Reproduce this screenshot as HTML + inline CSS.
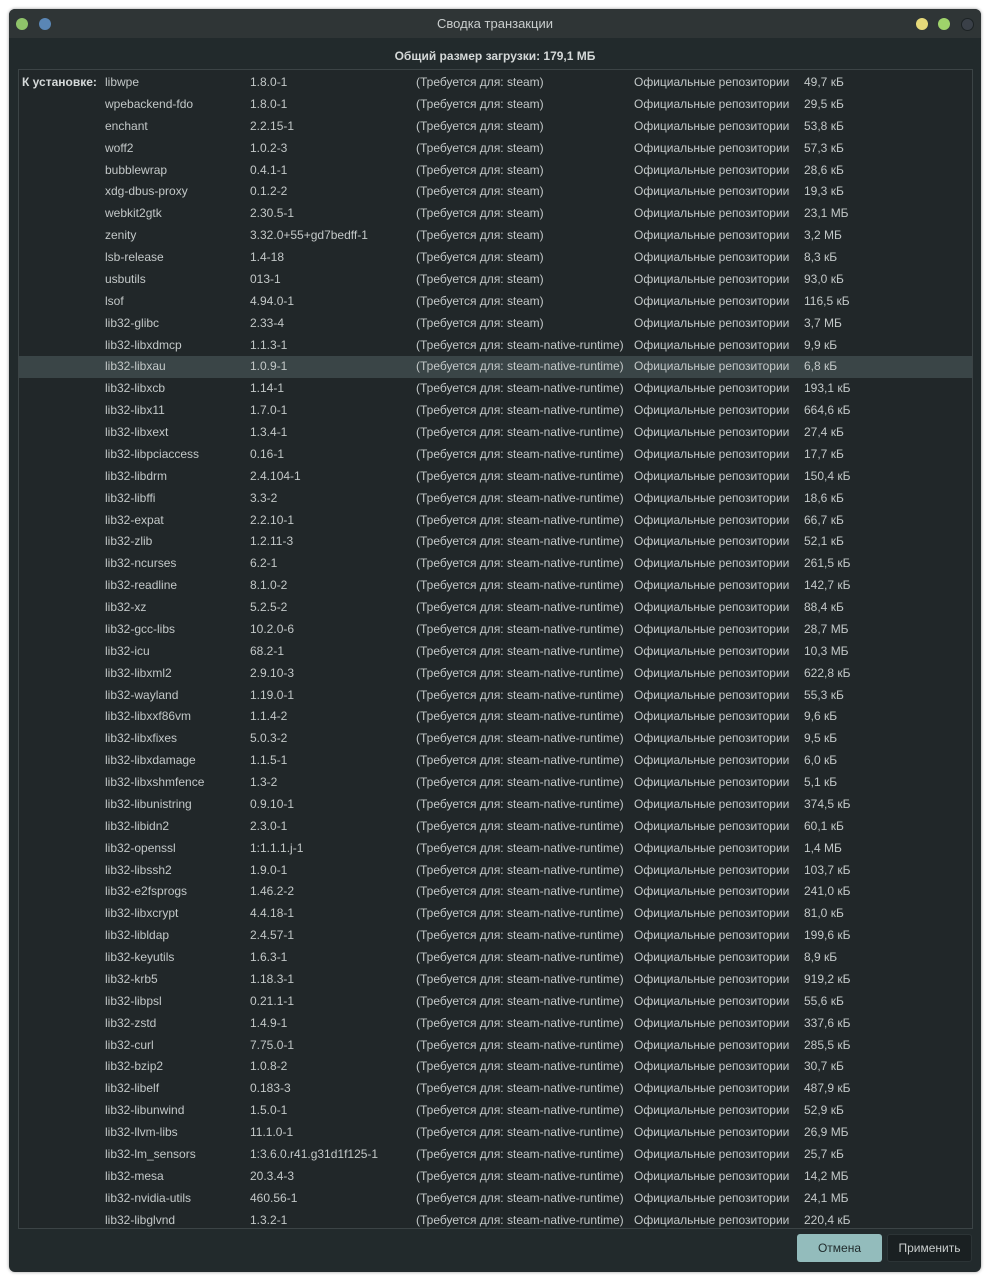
<!DOCTYPE html>
<html><head><meta charset="utf-8"><style>
body{margin:0;width:990px;height:1280px;background:#fff;font-family:"Liberation Sans","DejaVu Sans",sans-serif;overflow:hidden}
.win{position:absolute;left:9px;top:9px;width:972px;height:1263px;background:#222a2c;border-radius:6px;overflow:hidden;box-shadow:0 0 3px rgba(0,0,0,.4)}
.tb{position:absolute;left:0;top:0;width:972px;height:29px;background:#2f3536;color:#c9cdcd;font-size:13px;text-align:center;line-height:30px}
.dot{position:absolute;top:9px;width:12px;height:12px;border-radius:50%}
.hdr{position:absolute;left:0;top:40px;width:972px;text-align:center;color:#d5d9d9;font-size:12px;font-weight:bold}
.box{position:absolute;left:9px;top:60px;width:953px;height:1158px;border:1px solid #3c4446;background:#212729}
.rows{position:absolute;left:0;top:2px;width:953px}
.r{position:relative;height:21.88px;line-height:21.88px;font-size:12px;color:#c3c8c8;white-space:nowrap}
.r.h{background:#3a4547}
.r span{position:absolute}
.a{left:86px}.b{left:231px}.c{left:397px}.d{left:615px}.e{left:785px}
.lbl{left:3px;font-weight:bold;color:#d5d9d9}
.btn{position:absolute;top:1225px;height:28px;line-height:28px;text-align:center;font-size:12px;border-radius:3px}
</style></head><body>
<div class="win">
<div class="tb">Сводка транзакции
<div class="dot" style="left:7px;background:#8fc36a"></div>
<div class="dot" style="left:30px;background:#5a86b5"></div>
<div class="dot" style="left:907px;background:#e6d97a"></div>
<div class="dot" style="left:929px;background:#9fd36b"></div>
<div class="dot" style="left:952px;background:#3a4048;border:1px solid #1c2224;width:11px;height:11px"></div>
</div>
<div class="hdr">Общий размер загрузки: 179,1 МБ</div>
<div class="box"><div class="rows">
<div class="r"><span class="lbl">К установке:</span><span class="a">libwpe</span><span class="b">1.8.0-1</span><span class="c">(Требуется для: steam)</span><span class="d">Официальные репозитории</span><span class="e">49,7 кБ</span></div>
<div class="r"><span class="a">wpebackend-fdo</span><span class="b">1.8.0-1</span><span class="c">(Требуется для: steam)</span><span class="d">Официальные репозитории</span><span class="e">29,5 кБ</span></div>
<div class="r"><span class="a">enchant</span><span class="b">2.2.15-1</span><span class="c">(Требуется для: steam)</span><span class="d">Официальные репозитории</span><span class="e">53,8 кБ</span></div>
<div class="r"><span class="a">woff2</span><span class="b">1.0.2-3</span><span class="c">(Требуется для: steam)</span><span class="d">Официальные репозитории</span><span class="e">57,3 кБ</span></div>
<div class="r"><span class="a">bubblewrap</span><span class="b">0.4.1-1</span><span class="c">(Требуется для: steam)</span><span class="d">Официальные репозитории</span><span class="e">28,6 кБ</span></div>
<div class="r"><span class="a">xdg-dbus-proxy</span><span class="b">0.1.2-2</span><span class="c">(Требуется для: steam)</span><span class="d">Официальные репозитории</span><span class="e">19,3 кБ</span></div>
<div class="r"><span class="a">webkit2gtk</span><span class="b">2.30.5-1</span><span class="c">(Требуется для: steam)</span><span class="d">Официальные репозитории</span><span class="e">23,1 МБ</span></div>
<div class="r"><span class="a">zenity</span><span class="b">3.32.0+55+gd7bedff-1</span><span class="c">(Требуется для: steam)</span><span class="d">Официальные репозитории</span><span class="e">3,2 МБ</span></div>
<div class="r"><span class="a">lsb-release</span><span class="b">1.4-18</span><span class="c">(Требуется для: steam)</span><span class="d">Официальные репозитории</span><span class="e">8,3 кБ</span></div>
<div class="r"><span class="a">usbutils</span><span class="b">013-1</span><span class="c">(Требуется для: steam)</span><span class="d">Официальные репозитории</span><span class="e">93,0 кБ</span></div>
<div class="r"><span class="a">lsof</span><span class="b">4.94.0-1</span><span class="c">(Требуется для: steam)</span><span class="d">Официальные репозитории</span><span class="e">116,5 кБ</span></div>
<div class="r"><span class="a">lib32-glibc</span><span class="b">2.33-4</span><span class="c">(Требуется для: steam)</span><span class="d">Официальные репозитории</span><span class="e">3,7 МБ</span></div>
<div class="r"><span class="a">lib32-libxdmcp</span><span class="b">1.1.3-1</span><span class="c">(Требуется для: steam-native-runtime)</span><span class="d">Официальные репозитории</span><span class="e">9,9 кБ</span></div>
<div class="r h"><span class="a">lib32-libxau</span><span class="b">1.0.9-1</span><span class="c">(Требуется для: steam-native-runtime)</span><span class="d">Официальные репозитории</span><span class="e">6,8 кБ</span></div>
<div class="r"><span class="a">lib32-libxcb</span><span class="b">1.14-1</span><span class="c">(Требуется для: steam-native-runtime)</span><span class="d">Официальные репозитории</span><span class="e">193,1 кБ</span></div>
<div class="r"><span class="a">lib32-libx11</span><span class="b">1.7.0-1</span><span class="c">(Требуется для: steam-native-runtime)</span><span class="d">Официальные репозитории</span><span class="e">664,6 кБ</span></div>
<div class="r"><span class="a">lib32-libxext</span><span class="b">1.3.4-1</span><span class="c">(Требуется для: steam-native-runtime)</span><span class="d">Официальные репозитории</span><span class="e">27,4 кБ</span></div>
<div class="r"><span class="a">lib32-libpciaccess</span><span class="b">0.16-1</span><span class="c">(Требуется для: steam-native-runtime)</span><span class="d">Официальные репозитории</span><span class="e">17,7 кБ</span></div>
<div class="r"><span class="a">lib32-libdrm</span><span class="b">2.4.104-1</span><span class="c">(Требуется для: steam-native-runtime)</span><span class="d">Официальные репозитории</span><span class="e">150,4 кБ</span></div>
<div class="r"><span class="a">lib32-libffi</span><span class="b">3.3-2</span><span class="c">(Требуется для: steam-native-runtime)</span><span class="d">Официальные репозитории</span><span class="e">18,6 кБ</span></div>
<div class="r"><span class="a">lib32-expat</span><span class="b">2.2.10-1</span><span class="c">(Требуется для: steam-native-runtime)</span><span class="d">Официальные репозитории</span><span class="e">66,7 кБ</span></div>
<div class="r"><span class="a">lib32-zlib</span><span class="b">1.2.11-3</span><span class="c">(Требуется для: steam-native-runtime)</span><span class="d">Официальные репозитории</span><span class="e">52,1 кБ</span></div>
<div class="r"><span class="a">lib32-ncurses</span><span class="b">6.2-1</span><span class="c">(Требуется для: steam-native-runtime)</span><span class="d">Официальные репозитории</span><span class="e">261,5 кБ</span></div>
<div class="r"><span class="a">lib32-readline</span><span class="b">8.1.0-2</span><span class="c">(Требуется для: steam-native-runtime)</span><span class="d">Официальные репозитории</span><span class="e">142,7 кБ</span></div>
<div class="r"><span class="a">lib32-xz</span><span class="b">5.2.5-2</span><span class="c">(Требуется для: steam-native-runtime)</span><span class="d">Официальные репозитории</span><span class="e">88,4 кБ</span></div>
<div class="r"><span class="a">lib32-gcc-libs</span><span class="b">10.2.0-6</span><span class="c">(Требуется для: steam-native-runtime)</span><span class="d">Официальные репозитории</span><span class="e">28,7 МБ</span></div>
<div class="r"><span class="a">lib32-icu</span><span class="b">68.2-1</span><span class="c">(Требуется для: steam-native-runtime)</span><span class="d">Официальные репозитории</span><span class="e">10,3 МБ</span></div>
<div class="r"><span class="a">lib32-libxml2</span><span class="b">2.9.10-3</span><span class="c">(Требуется для: steam-native-runtime)</span><span class="d">Официальные репозитории</span><span class="e">622,8 кБ</span></div>
<div class="r"><span class="a">lib32-wayland</span><span class="b">1.19.0-1</span><span class="c">(Требуется для: steam-native-runtime)</span><span class="d">Официальные репозитории</span><span class="e">55,3 кБ</span></div>
<div class="r"><span class="a">lib32-libxxf86vm</span><span class="b">1.1.4-2</span><span class="c">(Требуется для: steam-native-runtime)</span><span class="d">Официальные репозитории</span><span class="e">9,6 кБ</span></div>
<div class="r"><span class="a">lib32-libxfixes</span><span class="b">5.0.3-2</span><span class="c">(Требуется для: steam-native-runtime)</span><span class="d">Официальные репозитории</span><span class="e">9,5 кБ</span></div>
<div class="r"><span class="a">lib32-libxdamage</span><span class="b">1.1.5-1</span><span class="c">(Требуется для: steam-native-runtime)</span><span class="d">Официальные репозитории</span><span class="e">6,0 кБ</span></div>
<div class="r"><span class="a">lib32-libxshmfence</span><span class="b">1.3-2</span><span class="c">(Требуется для: steam-native-runtime)</span><span class="d">Официальные репозитории</span><span class="e">5,1 кБ</span></div>
<div class="r"><span class="a">lib32-libunistring</span><span class="b">0.9.10-1</span><span class="c">(Требуется для: steam-native-runtime)</span><span class="d">Официальные репозитории</span><span class="e">374,5 кБ</span></div>
<div class="r"><span class="a">lib32-libidn2</span><span class="b">2.3.0-1</span><span class="c">(Требуется для: steam-native-runtime)</span><span class="d">Официальные репозитории</span><span class="e">60,1 кБ</span></div>
<div class="r"><span class="a">lib32-openssl</span><span class="b">1:1.1.1.j-1</span><span class="c">(Требуется для: steam-native-runtime)</span><span class="d">Официальные репозитории</span><span class="e">1,4 МБ</span></div>
<div class="r"><span class="a">lib32-libssh2</span><span class="b">1.9.0-1</span><span class="c">(Требуется для: steam-native-runtime)</span><span class="d">Официальные репозитории</span><span class="e">103,7 кБ</span></div>
<div class="r"><span class="a">lib32-e2fsprogs</span><span class="b">1.46.2-2</span><span class="c">(Требуется для: steam-native-runtime)</span><span class="d">Официальные репозитории</span><span class="e">241,0 кБ</span></div>
<div class="r"><span class="a">lib32-libxcrypt</span><span class="b">4.4.18-1</span><span class="c">(Требуется для: steam-native-runtime)</span><span class="d">Официальные репозитории</span><span class="e">81,0 кБ</span></div>
<div class="r"><span class="a">lib32-libldap</span><span class="b">2.4.57-1</span><span class="c">(Требуется для: steam-native-runtime)</span><span class="d">Официальные репозитории</span><span class="e">199,6 кБ</span></div>
<div class="r"><span class="a">lib32-keyutils</span><span class="b">1.6.3-1</span><span class="c">(Требуется для: steam-native-runtime)</span><span class="d">Официальные репозитории</span><span class="e">8,9 кБ</span></div>
<div class="r"><span class="a">lib32-krb5</span><span class="b">1.18.3-1</span><span class="c">(Требуется для: steam-native-runtime)</span><span class="d">Официальные репозитории</span><span class="e">919,2 кБ</span></div>
<div class="r"><span class="a">lib32-libpsl</span><span class="b">0.21.1-1</span><span class="c">(Требуется для: steam-native-runtime)</span><span class="d">Официальные репозитории</span><span class="e">55,6 кБ</span></div>
<div class="r"><span class="a">lib32-zstd</span><span class="b">1.4.9-1</span><span class="c">(Требуется для: steam-native-runtime)</span><span class="d">Официальные репозитории</span><span class="e">337,6 кБ</span></div>
<div class="r"><span class="a">lib32-curl</span><span class="b">7.75.0-1</span><span class="c">(Требуется для: steam-native-runtime)</span><span class="d">Официальные репозитории</span><span class="e">285,5 кБ</span></div>
<div class="r"><span class="a">lib32-bzip2</span><span class="b">1.0.8-2</span><span class="c">(Требуется для: steam-native-runtime)</span><span class="d">Официальные репозитории</span><span class="e">30,7 кБ</span></div>
<div class="r"><span class="a">lib32-libelf</span><span class="b">0.183-3</span><span class="c">(Требуется для: steam-native-runtime)</span><span class="d">Официальные репозитории</span><span class="e">487,9 кБ</span></div>
<div class="r"><span class="a">lib32-libunwind</span><span class="b">1.5.0-1</span><span class="c">(Требуется для: steam-native-runtime)</span><span class="d">Официальные репозитории</span><span class="e">52,9 кБ</span></div>
<div class="r"><span class="a">lib32-llvm-libs</span><span class="b">11.1.0-1</span><span class="c">(Требуется для: steam-native-runtime)</span><span class="d">Официальные репозитории</span><span class="e">26,9 МБ</span></div>
<div class="r"><span class="a">lib32-lm_sensors</span><span class="b">1:3.6.0.r41.g31d1f125-1</span><span class="c">(Требуется для: steam-native-runtime)</span><span class="d">Официальные репозитории</span><span class="e">25,7 кБ</span></div>
<div class="r"><span class="a">lib32-mesa</span><span class="b">20.3.4-3</span><span class="c">(Требуется для: steam-native-runtime)</span><span class="d">Официальные репозитории</span><span class="e">14,2 МБ</span></div>
<div class="r"><span class="a">lib32-nvidia-utils</span><span class="b">460.56-1</span><span class="c">(Требуется для: steam-native-runtime)</span><span class="d">Официальные репозитории</span><span class="e">24,1 МБ</span></div>
<div class="r"><span class="a">lib32-libglvnd</span><span class="b">1.3.2-1</span><span class="c">(Требуется для: steam-native-runtime)</span><span class="d">Официальные репозитории</span><span class="e">220,4 кБ</span></div>
</div></div>
<div class="btn" style="left:788px;width:85px;background:#93bcbc;color:#1f2a2b">Отмена</div>
<div class="btn" style="left:878px;width:83px;background:#1a2022;color:#c9cdcd;border:1px solid #2c3436;height:26px;line-height:26px">Применить</div>
</div>
</body></html>
